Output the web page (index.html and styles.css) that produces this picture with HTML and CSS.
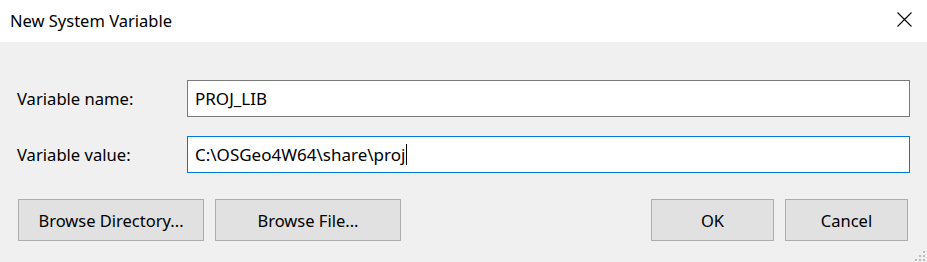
FILE: index.html
```html
<!DOCTYPE html>
<html lang="en">
<head>
    <meta charset="UTF-8">
    <title>New System Variable</title>
    <link rel="stylesheet" href="styles.css">
</head>
<body>
    <div class="dialog">
        <header class="titlebar">
            <span class="title">New System Variable</span>
            <svg class="close" width="15" height="15" viewBox="0 0 15 15">
                <path d="M0.5 0.5 L14.5 14.5 M14.5 0.5 L0.5 14.5" stroke="#000" stroke-width="1.1" fill="none"/>
            </svg>
        </header>

        <div class="content">
            <div class="field">
                <label>Variable name:</label>
                <div class="textbox">PROJ_LIB</div>
            </div>
            <div class="field">
                <label>Variable value:</label>
                <div class="textbox focused">C:\OSGeo4W64\share\proj<span class="caret"></span></div>
            </div>

            <div class="buttons">
                <div class="group">
                    <button class="btn wide">Browse Directory...</button>
                    <button class="btn wide">Browse File...</button>
                </div>
                <div class="group">
                    <button class="btn">OK</button>
                    <button class="btn">Cancel</button>
                </div>
            </div>
        </div>

        <!-- resize grip -->
        <svg class="grip" width="12" height="12" viewBox="0 0 12 12">
            <rect x="9" y="1" width="2" height="2" fill="#bcbcbc"/>
            <rect x="5" y="5" width="2" height="2" fill="#bcbcbc"/>
            <rect x="9" y="5" width="2" height="2" fill="#bcbcbc"/>
            <rect x="1" y="9" width="2" height="2" fill="#bcbcbc"/>
            <rect x="5" y="9" width="2" height="2" fill="#bcbcbc"/>
            <rect x="9" y="9" width="2" height="2" fill="#bcbcbc"/>
        </svg>
    </div>
</body>
</html>
```

FILE: styles.css
```css
body {
    margin: 0;
    padding: 0;
    font-family: "Noto Sans", "Open Sans", sans-serif;
    font-size: 17px;
    color: #000;
    background-color: #f0f0f0;
}

.dialog {
    position: relative;
    width: 927px;
    height: 262px;
    background-color: #f0f0f0;
    overflow: hidden;
}

.titlebar {
    height: 42px;
    background-color: #fff;
    display: flex;
    align-items: center;
    justify-content: space-between;
    padding: 0 15px 0 10px;
}

.title {
    font-size: 16.5px;
    margin-top: -2px;
}

.close {
    margin-top: -3px;
}

.content {
    display: flex;
    flex-direction: column;
    gap: 19px;
    padding: 38px 17px 0 17px;
}

.field {
    display: flex;
    align-items: center;
}

.field label {
    width: 170px;
    flex-shrink: 0;
    font-size: 16.6px;
}

.textbox {
    flex: 1;
    height: 35px;
    border: 1px solid #7a7a7a;
    background-color: #fff;
    padding: 0 7px;
    display: flex;
    align-items: center;
}

.textbox.focused {
    border-color: #0078d7;
}

.caret {
    display: inline-block;
    width: 1px;
    height: 21px;
    background-color: #000;
    margin-left: 1px;
}

.buttons {
    display: flex;
    justify-content: space-between;
    margin: 7px 2px 0 1px;
}

.group {
    display: flex;
    gap: 11px;
}

.btn {
    width: 123px;
    height: 42px;
    font-family: inherit;
    font-size: 16.5px;
    color: #000;
    background-color: #e1e1e1;
    border: 1px solid #adadad;
    padding: 0;
}

.btn.wide {
    width: 186px;
}

.grip {
    position: absolute;
    right: 1px;
    bottom: 0;
}
```
